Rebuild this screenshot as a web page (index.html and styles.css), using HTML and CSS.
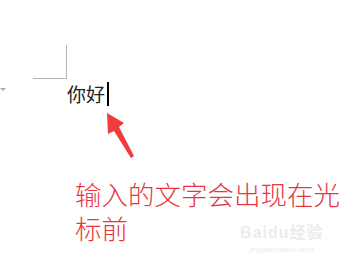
FILE: index.html
```html
<!DOCTYPE html>
<html lang="zh-CN">
<head>
  <meta charset="UTF-8">
  <title>光标</title>
  <link rel="stylesheet" href="styles.css">
</head>
<body>
  <div class="doc">
    <span class="marker"></span>
    <div class="corner"></div>
    <p class="typed">你好<span class="cursor"></span></p>

    <!-- 箭头 -->
    <svg class="arrow" width="357" height="265" viewBox="0 0 357 265">
      <polygon points="107,113 124,123 119,127 134,156 131,158 114,131 108,134" fill="#f03c3c"/>
    </svg>

    <p class="note"><span>输入的文字会出现在光</span><span>标前</span></p>

    <div class="watermark">
      <span class="wm-logo">Baidu经验</span>
      <span class="wm-url">jingyan.baidu.com</span>
    </div>
  </div>
</body>
</html>
```

FILE: styles.css
```css
body {
  margin: 0;
  background: #fff;
  font-family: "Noto Sans CJK SC", "Noto Sans", sans-serif;
}

.doc {
  position: relative;
  width: 357px;
  height: 265px;
  overflow: hidden;
  padding-top: 45px;
  box-sizing: border-box;
}

.marker {
  position: absolute;
  left: 0;
  top: 88px;
  width: 0;
  height: 0;
  border-left: 3px solid transparent;
  border-right: 3px solid transparent;
  border-top: 3px solid #aaa;
}

.corner {
  width: 33px;
  height: 33px;
  margin-left: 33px;
  border-right: 1px solid #b4b4b4;
  border-bottom: 1px solid #b4b4b4;
}

.typed {
  margin: 2px 0 0 67px;
  font-size: 19px;
  line-height: 26px;
  color: #222;
  display: flex;
  align-items: center;
}

.cursor {
  display: inline-block;
  width: 2px;
  height: 24px;
  margin-left: 2px;
  background: #000;
}

.arrow {
  position: absolute;
  left: 0;
  top: 0;
}

.note {
  margin: 70px 0 0 75px;
  font-size: 26.5px;
  line-height: 34px;
  color: #e8363f;
  font-weight: 300;
  display: flex;
  flex-direction: column;
  align-items: flex-start;
}

.watermark {
  position: absolute;
  left: 240px;
  top: 224px;
  color: #ececec;
  display: flex;
  flex-direction: column;
  align-items: center;
  gap: 3px;
}

.wm-logo {
  font-size: 16px;
  font-weight: bold;
  line-height: 18px;
  letter-spacing: 1px;
  font-family: "Liberation Sans", "Noto Sans CJK SC", sans-serif;
}

.wm-url {
  font-size: 8px;
  line-height: 9px;
  font-family: "Liberation Sans", sans-serif;
}
```
